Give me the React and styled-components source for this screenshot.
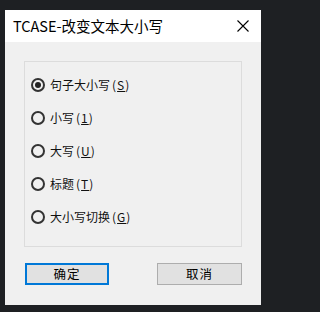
import React, { useState } from "react";
import styled, { createGlobalStyle } from "styled-components";

const Global = createGlobalStyle`
  html, body { margin: 0; padding: 0; background: #1e2023; }
  body { font-family: "Noto Sans CJK SC", "Noto Sans", sans-serif; }
`;

const Screen = styled.div`
  width: 266px;
  height: 312px;
  box-sizing: border-box;
  padding: 10px 5px 7px 5px;
  background: #1e2023;
`;

const Window = styled.div`
  width: 256px;
  height: 295px;
  display: flex;
  flex-direction: column;
  background: #f0f0f0;
`;

const TitleBar = styled.div`
  height: 32px;
  flex: none;
  background: #ffffff;
  display: flex;
  align-items: center;
  justify-content: space-between;
  padding: 0 12px 0 8px;
`;

const Title = styled.div`
  font-family: "Noto Sans CJK SC", sans-serif;
  font-size: 14.5px;
  color: #000;
  line-height: 1;
  margin-top: 1px;
`;

const CloseIcon = styled.svg`
  width: 12px;
  height: 12px;
  display: block;
`;

const Body = styled.div`
  flex: 1;
  display: flex;
  flex-direction: column;
  padding: 19px 19px 20px 19px;
`;

const Group = styled.div`
  height: 186px;
  box-sizing: border-box;
  border: 1px solid #dcdcdc;
  display: flex;
  flex-direction: column;
  padding: 16px 0 0 6px;
  gap: 19px;
`;

const Option = styled.label`
  display: flex;
  align-items: center;
  height: 14px;
  gap: 5px;
  cursor: default;
  font-size: 12px;
  color: #111;
  line-height: 14px;
`;

const Radio = styled.span`
  width: 14px;
  height: 14px;
  box-sizing: border-box;
  border-radius: 50%;
  border: 2px solid #333;
  display: flex;
  align-items: center;
  justify-content: center;
  flex: none;
  &::after {
    content: "";
    width: 6px;
    height: 6px;
    border-radius: 50%;
    background: ${(p) => (p.$checked ? "#222" : "transparent")};
  }
`;

const Mnemonic = styled.span`
  margin-left: 2px;
  letter-spacing: 1px;
  & u { text-underline-offset: 1px; }
`;

const Buttons = styled.div`
  display: flex;
  justify-content: space-between;
  margin-top: 16px;
  padding-left: 1px;
`;

const Button = styled.button`
  width: ${(p) => (p.$wide ? "85px" : "84px")};
  height: 22px;
  box-sizing: border-box;
  background: #e1e1e1;
  border: ${(p) => (p.$default ? "2px solid #0078d7" : "1px solid #adadad")};
  font-family: "Noto Sans CJK SC", sans-serif;
  font-size: 12.5px;
  color: #000;
  padding: 0;
  letter-spacing: 1px;
  line-height: 1;
`;

const options = [
  { label: "句子大小写", key: "S" },
  { label: "小写", key: "1" },
  { label: "大写", key: "U" },
  { label: "标题", key: "T" },
  { label: "大小写切换", key: "G" },
];

export default function App() {
  const [sel, setSel] = useState(0);
  return (
    <>
      <Global />
      <Screen>
        <Window>
          <TitleBar>
            <Title>TCASE-改变文本大小写</Title>
            <CloseIcon viewBox="0 0 12 12">
              <path d="M0.5 0.5 L11.5 11.5 M11.5 0.5 L0.5 11.5" stroke="#000" strokeWidth="1.1" />
            </CloseIcon>
          </TitleBar>
          <Body>
            <Group>
              {options.map((o, i) => (
                <Option key={o.key} onClick={() => setSel(i)}>
                  <Radio $checked={sel === i} />
                  <span>
                    {o.label}
                    <Mnemonic>
                      (<u>{o.key}</u>)
                    </Mnemonic>
                  </span>
                </Option>
              ))}
            </Group>
            <Buttons>
              <Button $default>确定</Button>
              <Button $wide>取消</Button>
            </Buttons>
          </Body>
        </Window>
      </Screen>
    </>
  );
}
